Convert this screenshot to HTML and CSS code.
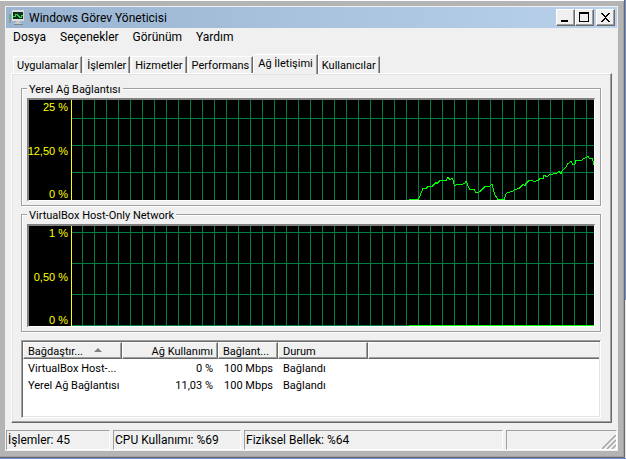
FILE: index.html
```html
<!DOCTYPE html>
<html lang="tr">
<head>
<meta charset="utf-8">
<title>Windows Görev Yöneticisi</title>
<link rel="stylesheet" href="styles.css">
</head>
<body>
<main class="window">
  <div class="client">
    <header class="titlebar">
      <svg class="app-icon" width="16" height="16" viewBox="0 0 16 16" shape-rendering="crispEdges" aria-hidden="true">
        <path d="M0 4h2v9H0z" fill="#8d9a96"/>
        <path d="M0 5h1v4H0z" fill="#4fbf5a"/>
        <path d="M3 0h12v11H3z" fill="#d9dcd9"/>
        <path d="M4 2h10v7H4z" fill="#10301c"/>
        <path d="M4 6.500h2v-2h2v1h1v1h1v1h2v-2h2" fill="none" stroke="#35d455"/>
        <path d="M7 11h4v2h2v1H5v-1h2z" fill="#c4c8c6"/>
        <path d="M5 14h9v1H5z" fill="#7e8684"/>
      </svg>
      <h1 class="title">Windows Görev Yöneticisi</h1>
      <div class="controls">
        <button class="control" aria-label="Simge durumuna küçült"><svg width="15" height="13" viewBox="0 0 15 13" shape-rendering="crispEdges"><path d="M3 9h7v2H3z"/></svg></button>
        <button class="control" aria-label="Ekranı kapla"><svg width="15" height="13" viewBox="0 0 15 13" shape-rendering="crispEdges"><path d="M2 1h10v10H2zM3 3v7h8V3z" fill-rule="evenodd"/></svg></button>
        <button class="control close" aria-label="Kapat"><svg width="15" height="13" viewBox="0 0 15 13" shape-rendering="crispEdges"><path d="M3 2h2v1h1v1h1v1h1V4h1V3h1V2h2v1h-1v1h-1v1H9v1H8v1h1v1h1v1h1v1h1v1h-2v-1H9V9H8V8H7v1H6v1H5v1H3v-1h1V9h1V8h1V7h1V6H6V5H5V4H4V3H3z"/></svg></button>
      </div>
    </header>
    <nav class="menu">
      <button>Dosya</button>
      <button>Seçenekler</button>
      <button>Görünüm</button>
      <button>Yardım</button>
    </nav>
    <section class="body">
      <div class="tabs" role="tablist">
        <button class="tab" role="tab">Uygulamalar</button>
        <button class="tab" role="tab">İşlemler</button>
        <button class="tab" role="tab">Hizmetler</button>
        <button class="tab" role="tab">Performans</button>
        <button class="tab active" role="tab" aria-selected="true">Ağ İletişimi</button>
        <button class="tab" role="tab">Kullanıcılar</button>
      </div>
      <div class="pane" role="tabpanel">
        <fieldset class="group">
          <legend>Yerel Ağ Bağlantısı</legend>
          <div class="graph">
            <div class="scale"><span>25 %</span><span>12,50 %</span><span>0 %</span></div>
            <div class="plot plot-quarter">
              <svg viewBox="72 100 522 100" preserveAspectRatio="none" shape-rendering="crispEdges" aria-hidden="true">
                <polyline class="trace" points="409,199.5 418,199.5 420,196 421,193 422,191 423,188.5 426,188.5 428,186.5 432,186.5 434,184.5 436,182.5 437,183.5 439,181.5 440,180.5 446,180.5 448,177.5 450,179.5 452,178.5 453,180 453,183 455,185.5 457,184.5 462,184.5 465,183 466,181 467,183 468,186 470,189.5 474,189.5 476,193 480,191.5 485,186.5 489,186.5 492,184.5 493,188 495,195 497,198 498,199.5 504,199.5 506,194 508,192.5 512,191.5 515,189.5 519,188.5 523,184.5 525,185.5 526,183.5 529,180.5 532,180.5 534,181.5 538,180.5 540,178.5 543,178.5 544,175.5 547,176.5 550,174.5 556,173.5 559,171.5 561,173.5 562,171 566,167 568,163.5 571,161.5 573,164.5 575,164.5 576,160.5 581,160.5 584,158.5 586,157.5 588,156.5 590,159 592,158.5 593,161 594,165"/>
              </svg>
            </div>
          </div>
        </fieldset>
        <fieldset class="group">
          <legend>VirtualBox Host-Only Network</legend>
          <div class="graph">
            <div class="scale"><span>1 %</span><span>0,50 %</span><span>0 %</span></div>
            <div class="plot plot-third">
              <svg viewBox="72 100 522 100" preserveAspectRatio="none" shape-rendering="crispEdges" aria-hidden="true">
                <path class="bar" d="M409 199h185v1H409z"/>
              </svg>
            </div>
          </div>
        </fieldset>
        <div class="list">
          <table>
            <colgroup><col class="c-name"><col class="c-use"><col class="c-speed"><col class="c-state"><col></colgroup>
            <thead>
              <tr>
                <th>Bağdaştır...<svg class="sort" width="8" height="4" viewBox="0 0 8 4" aria-hidden="true"><path d="M4 0l4 4H0z"/></svg></th>
                <th class="num">Ağ Kullanımı</th>
                <th>Bağlant...</th>
                <th>Durum</th>
                <th class="rest"></th>
              </tr>
            </thead>
            <tbody>
              <tr><td>VirtualBox Host-...</td><td class="num">0 %</td><td class="num">100 Mbps</td><td>Bağlandı</td><td></td></tr>
              <tr><td>Yerel Ağ Bağlantısı</td><td class="num">11,03 %</td><td class="num">100 Mbps</td><td>Bağlandı</td><td></td></tr>
            </tbody>
          </table>
        </div>
      </div>
    </section>
    <footer class="status">
      <span class="cell">İşlemler: 45</span>
      <span class="cell">CPU Kullanımı: %69</span>
      <span class="cell">Fiziksel Bellek: %64</span>
      <span class="cell"><svg class="grip" width="14" height="14" viewBox="0 0 14 14" aria-hidden="true"><path d="M1 14L14 1M6 14L14 6M11 14L14 11" stroke="#fff"/><path d="M0 14L14 0M5 14L14 5M10 14L14 10" stroke="#a0a0a0" stroke-width="1.5"/></svg></span>
    </footer>
  </div>
</main>
</body>
</html>
```
FILE: styles.css
```css
* { box-sizing: border-box; }

body {
  margin: 0;
  padding-right: 1px;
  background: linear-gradient(#6d8ed4 300px, #e8e8e8 300px);
  font: 11px/13px Roboto, sans-serif;
  color: #000;
}

button {
  margin: 0;
  border: 0;
  padding: 0;
  background: none;
  font: inherit;
  color: inherit;
  white-space: nowrap;
}

svg { display: block; }

.window {
  border: solid #696969;
  border-width: 0 1px 1px 0;
  background: #b4b4b4;
  box-shadow: inset 0 1px #fff, inset -1px -1px #a0a0a0;
  padding: 6px 6px 6px 5px;
}

.client {
  background: #f0f0f0;
  padding: 1px;
}

.titlebar {
  display: flex;
  align-items: center;
  height: 21px;
  padding: 0 2px 0 3px;
  background: linear-gradient(90deg, #99b4d1, #b9d1ea);
}

.title {
  flex: 1;
  margin: 0 0 0 4px;
  font-size: 12px;
  font-weight: 400;
  line-height: 16px;
}

.controls { display: flex; }

.control {
  width: 19px;
  height: 17px;
  border: 1px solid;
  border-color: #fff #696969 #696969 #fff;
  background: #f0f0f0;
  box-shadow: inset -1px -1px #a0a0a0;
  padding: 1px;
}

.close { margin-left: 2px; }

.menu {
  display: flex;
  gap: 14px;
  height: 19px;
  padding-left: 7px;
  font-size: 12px;
}

.body { padding: 7px 5px 7px; }

.tabs {
  display: flex;
  align-items: flex-end;
  padding-left: 2px;
}

.tab {
  height: 17px;
  margin-right: 1px;
  border: solid;
  border-width: 1px 1px 0;
  border-color: #fff #696969 #fff #fff;
  box-shadow: inset -1px 0 #a0a0a0;
  padding: 0 3px;
}

.active {
  position: relative;
  height: 20px;
  margin: 0 0 -1px -1px;
  background: #f0f0f0;
  padding: 0 4px 2px;
}

.pane {
  border: 1px solid;
  border-color: #fff #696969 #696969 #fff;
  box-shadow: inset -1px -1px #a0a0a0, inset 1px 1px #e3e3e3;
  padding: 7px 10px 4px 9px;
}

.group {
  min-width: 0;
  margin: 0 0 1px;
  border: 1px solid #a0a0a0;
  box-shadow: 1px 1px #fff, inset 1px 1px #fff;
  padding: 2px 5px 4px;
}

.group legend {
  background: #f0f0f0;
  padding: 2px 2px 0;
}

.graph {
  display: flex;
  height: 103px;
  border: solid;
  border-width: 2px 1px 1px 2px;
  border-color: #808080 #fff #fff #808080;
  background: #000;
}

.scale {
  display: flex;
  flex-direction: column;
  justify-content: space-between;
  width: 42px;
  padding: 2px 3px 0 0;
  font-family: "Liberation Sans", Arial, sans-serif;
  line-height: 11px;
  text-align: right;
  white-space: nowrap;
  color: #ff0;
}

.scale span { margin-left: -4px; }

.plot {
  flex: 1;
  border-left: 1px solid #ff0;
  background-image:
    repeating-linear-gradient(90deg, transparent 0 10px, #008040 10px 11px, transparent 11px 12px),
    repeating-linear-gradient(transparent 0 26px, #008040 26px 27px);
  background-position: 0 0, 0 -8px;
}

.plot-third {
  background-image:
    repeating-linear-gradient(90deg, transparent 0 10px, #008040 10px 11px, transparent 11px 12px),
    repeating-linear-gradient(transparent 0 6px, #008040 6px 7px, transparent 7px 31px);
  background-position: 0 0;
}

.plot svg {
  width: 100%;
  height: 100px;
}

.trace {
  fill: none;
  stroke: #0f0;
}

.bar { fill: #0f0; }

.list {
  height: 78px;
  margin-top: 8px;
  border: 1px solid;
  border-color: #a0a0a0 #fff #fff #a0a0a0;
  background: #fff;
  box-shadow: inset 1px 1px #696969, inset -1px -1px #e3e3e3;
  padding: 1px;
}

table {
  width: 100%;
  border-collapse: separate;
  border-spacing: 0;
  table-layout: fixed;
}

.c-name { width: 99px; }
.c-use { width: 96px; }
.c-speed { width: 60px; }
.c-state { width: 90px; }

th, td {
  height: 17px;
  overflow: hidden;
  padding: 2px 5px 0;
  font-weight: 400;
  text-align: left;
  white-space: nowrap;
}

th {
  border: 1px solid;
  border-color: #fff #696969 #696969 #fff;
  background: #f0f0f0;
  box-shadow: inset -1px -1px #a0a0a0;
  padding: 1px 4px 0;
}

.rest {
  border-right: 0;
  box-shadow: inset 0 -1px #a0a0a0;
}

.num { text-align: right; }

.sort {
  display: inline-block;
  margin: 0 0 3px 11px;
  fill: #808080;
}

.status {
  display: grid;
  grid-template-columns: 104px 128px 259px 1fr;
  gap: 3px;
  font-size: 12px;
  line-height: 18px;
}

.cell {
  display: flex;
  justify-content: space-between;
  height: 20px;
  border: 1px solid;
  border-color: #a0a0a0 #fff #fff #a0a0a0;
  padding-left: 1px;
  white-space: nowrap;
}

.grip { margin: auto 0 0 auto; }
```
